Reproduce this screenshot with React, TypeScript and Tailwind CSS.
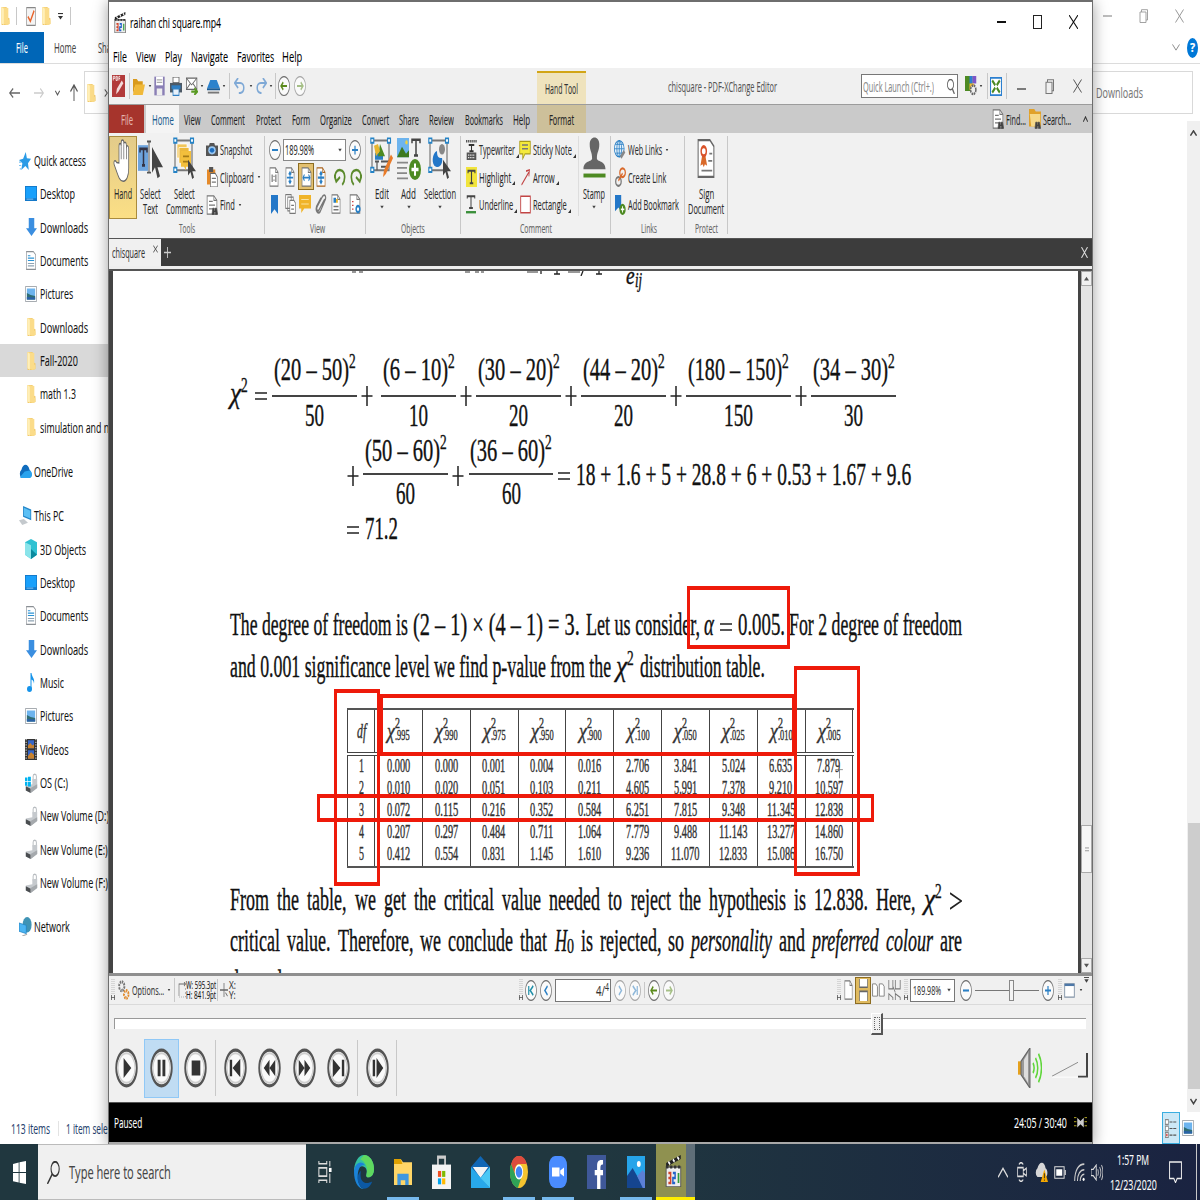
import React, { useLayoutEffect, useRef, useState } from "react";
import clsx from "clsx";

type Kids = { children?: React.ReactNode };

/* Text drawn in condensed form: either squeezed to the width w, or by the default ratio. */
function T({ w, className, children }: Kids & { w?: number; className?: string }) {
  const ref = useRef<HTMLSpanElement>(null);
  const [natural, setNatural] = useState(0);
  useLayoutEffect(() => {
    if (ref.current) setNatural(ref.current.offsetWidth);
  }, [children]);
  const width = w ?? natural * 0.5625;
  const scale = natural ? width / natural : 1;
  return (
    <span className={clsx("block shrink-0 whitespace-nowrap text-left", className)} style={{ width }}>
      <span ref={ref} className="inline-block origin-left" style={{ transform: `scaleX(${scale})` }}>
        {children}
      </span>
    </span>
  );
}

function I({ className, children, box = "0 0 16 16" }: Kids & { className?: string; box?: string }) {
  return (
    <svg viewBox={box} preserveAspectRatio="none" fill="none" className={clsx("block shrink-0", className)}>
      {children}
    </svg>
  );
}

const Caret = ({ className }: { className?: string }) => (
  <I className={clsx("h-[4px] w-[4px]", className)}>
    <path d="M1 3h14L8 14z" fill="#444" />
  </I>
);
const Sep = ({ className }: { className?: string }) => <div className={clsx("w-px shrink-0 bg-[#c8c8c8]", className)} />;

/* ---------- explorer icons ---------- */
const Folder = ({ className }: { className?: string }) => (
  <I className={className}>
    <path d="M1 0h9v9l5 1v5l-5 1H1z" fill="#f0c766" />
    <path d="M1 0l12 .8V11l2 1v3l-5 1L1 14.500z" fill="#fbdc8a" />
    <path d="M1 0l4 1.500V16l-4-1.500z" fill="#ffefb8" />
  </I>
);
const StarI = () => (
  <I className="h-[18px] w-[12px]">
    <path d="M9 0l1.500 5.500L16 6l-4 4 1 6-4.500-3.500L3 16l1.500-6L0 7l5.500-1z" fill="#2a9be6" />
    <path d="M0 9h3M0 12h3M1 15h2" stroke="#7cc3f2" />
  </I>
);
const DesktopI = () => (
  <I className="h-[15px] w-[12px]">
    <path d="M0 0h16v16H0z" fill="#1478c8" />
    <path d="M1 1h14v12H1z" fill="#19a0fb" />
    <path d="M2 14h9" stroke="#8fd0ff" />
  </I>
);
const DownI = () => (
  <I className="h-[18px] w-[11px]">
    <path d="M4 0h8v9h4l-8 7-8-7h4z" fill="#3a8ee0" />
  </I>
);
const DocI = () => (
  <I className="h-[19px] w-[10px]">
    <path d="M.7.500h11L15.300 3v12.500H.7z" fill="#fff" stroke="#8a8f94" />
    <path d="M3 4h4M3 6h10M3 8h10" stroke="#2a93d5" />
    <path d="M3 10.500h10M3 12.500h10" stroke="#8fa3b3" />
  </I>
);
const PicI = () => (
  <I className="h-[16px] w-[12px]">
    <path d="M.5.500h15v15H.5z" fill="#fff" stroke="#9aa0a6" />
    <path d="M2.500 2.500h11v11h-11z" fill="#6db4ee" />
    <path d="M2.500 7l5 2 6 1v3.500h-11z" fill="#2f6d74" />
    <path d="M2.500 11l11 .5v2h-11z" fill="#2b62a8" />
  </I>
);
const CloudI = () => (
  <I className="h-[15px] w-[13px]">
    <path d="M3 15a3.500 5 0 0 1 0-9C5-1 11-1 13 6a4 5 0 0 1 0 9z" fill="#0f6cbd" />
    <path d="M1 14l6-6 6-1c4 1 4 8 0 8H3z" fill="#29a3ee" />
  </I>
);
const PcI = () => (
  <I className="h-[19px] w-[13px]">
    <path d="M5 0l10 3v9L5 9z" fill="#2486c9" />
    <path d="M6 1.500l8 2.400v6.600L6 8.200z" fill="#5cc0f5" />
    <path d="M0 12l6-1 5 3-7 2z" fill="#c4c9cd" />
  </I>
);
const CubeI = () => (
  <I className="h-[20px] w-[12px]">
    <path d="M8 0l8 2.500v10L8 16 0 12.500v-10z" fill="#2fc1d2" />
    <path d="M0 2.500L8 5v11l-8-3.500z" fill="#8ae4ea" />
    <path d="M8 8l8 4.500L8 16z" fill="#0b8a9e" />
  </I>
);
const MusicI = () => (
  <I className="h-[19px] w-[8px]">
    <ellipse cx="5" cy="13.500" rx="5" ry="2.500" fill="#1593ea" />
    <path d="M7 0h2c1 4 7 4 5 9-1-3-3-3-5-3.500V14H7z" fill="#1593ea" />
  </I>
);
const VideoI = () => (
  <I className="h-[21px] w-[12px]">
    <path d="M0 0h16v16H0z" fill="#333" />
    <path d="M1.500 0v16M14.500 0v16" stroke="#ddd" strokeWidth="1.400" strokeDasharray="1 1" />
    <path d="M4 1h8v6H4zM4 8.500h8V15H4z" fill="#3566c8" />
    <path d="M4 5l3-2 3 2 2-1v3H4zM4 13l4-3 4 2v3H4z" fill="#c9822d" />
  </I>
);
const DriveI = ({ os }: { os?: boolean }) => (
  <I className="h-[20px] w-[13px]">
    <path d="M10 6V2.500c0-2 4-2 4 0V6" stroke="#b8bcc0" strokeWidth="1.200" />
    <path d="M9 5l6-.500V12l-8 4-6-2v-4l8-1z" fill="#c5c9cd" />
    <path d="M1 10.500l6 2V16l-6-2z" fill="#4a4d50" />
    <path d="M7 12l8-3v3l-8 4z" fill="#a5a9ad" />
    {os && <path d="M0 3.500h3v3H0zM3.700 3h3.500v3.500H3.700zM0 7.200h3v3H0zM3.700 7.200h3.500v3.500H3.700z" fill="#00b3f0" />}
  </I>
);
const NetI = () => (
  <I className="h-[19px] w-[13px]">
    <ellipse cx="10" cy="6.500" rx="5.500" ry="6.500" fill="#3f93b5" />
    <path d="M0 5l9 2v7l-9-2z" fill="#4bb4f2" stroke="#1e7fc0" strokeWidth=".7" />
    <path d="M4 16l6-1.500" stroke="#aaa" />
  </I>
);

function NavRow({ icon, w, children, top, active }: Kids & { icon: React.ReactNode; w: number; top?: boolean; active?: boolean }) {
  return (
    <div className={clsx("flex h-[33.33px] items-center", top ? "pl-[19px]" : "pl-[25px]", active && "bg-[#d9d9d9]")}>
      <div className="flex w-[15px] shrink-0">
        <div className="flex w-[12px] justify-center">{icon}</div>
      </div>
      <T w={w} className="text-[15px] leading-[21px]">{children}</T>
    </div>
  );
}

const WinBtns = ({ c }: { c: string }) => (
  <>
    <I className="h-[14px] w-[9px]" box="0 0 9 14"><path d="M0 7h9" stroke={c} strokeWidth="1.300" /></I>
    <I className="ml-[27px] h-[14px] w-[9px]" box="0 0 9 14"><path d="M1 3h6v10.500H1zM2.500 3V.700H8.500V11H7" stroke={c} strokeWidth=".9" /></I>
    <I className="ml-[27px] h-[14px] w-[9px]" box="0 0 9 14"><path d="M.5.500l8 13M8.500.500l-8 13" stroke={c} /></I>
  </>
);

function Explorer() {
  return (
    <div className="flex h-[1144px] flex-col bg-white">
      <div className="flex h-8 items-center">
        <Folder className="ml-[1px] h-[18px] w-[9px]" />
        <Sep className="ml-[6px] h-[18px] bg-[#999]" />
        <I className="ml-[9px] h-[19px] w-[10px]">
          <path d="M1 .500h14v15H1z" fill="#f4f4f4" stroke="#888" />
          <path d="M3 8l4 4 6-9" stroke="#e8632a" strokeWidth="2" />
        </I>
        <Folder className="ml-[6px] h-[18px] w-[9px]" />
        <I className="ml-[7px] h-[7px] w-[5px]"><path d="M0 1h16" stroke="#333" strokeWidth="3" /><path d="M0 7h16l-8 8z" fill="#333" /></I>
        <Sep className="ml-[7px] h-[18px] bg-[#999]" />
        <div className="ml-auto mr-[16px] flex items-center"><WinBtns c="#999" /></div>
      </div>
      <div className="flex h-8 items-center border-b border-[#dcdcdc] text-[15px]">
        <div className="flex h-[31px] w-[44px] items-center bg-[#0066b7] pl-[16px] text-white"><T w={12}>File</T></div>
        <T w={22} className="ml-[10px] text-[#444]">Home</T>
        <T w={20} className="ml-[22px] text-[#444]">Share</T>
        <I className="ml-auto h-[7px] w-[8px]"><path d="M1 1l7 13 7-13" stroke="#888" strokeWidth="2" /></I>
        <div className="ml-[7px] mr-[2px] flex h-[20px] w-[11px] items-center justify-center rounded-[50%] bg-[#0078d7] text-[13px] font-bold text-white"><T w={5}>?</T></div>
      </div>
      <div className="flex h-[57px] items-center">
        <I className="ml-[9px] h-[12px] w-[11px]"><path d="M16 8H1M6 2L1 8l5 6" stroke="#666" strokeWidth="1.700" /></I>
        <I className="ml-[14px] h-[12px] w-[10px]"><path d="M0 8h15M10 2l5 6-5 6" stroke="#ccc" strokeWidth="1.700" /></I>
        <I className="ml-[11px] h-[6px] w-[5px]"><path d="M1 2l7 11 7-11" stroke="#555" strokeWidth="3" /></I>
        <I className="ml-[10px] h-[17px] w-[8px]"><path d="M8 16V1M1 7l7-6 7 6" stroke="#555" strokeWidth="1.900" /></I>
        <div className="ml-[6px] flex h-[43px] w-[1109px] items-center border border-[#d9d9d9] text-[15px]">
          <Folder className="ml-[2px] h-[18px] w-[9px]" />
          <I className="ml-[8px] h-[8px] w-[4px]"><path d="M3 1l10 7-10 7" stroke="#555" strokeWidth="3" /></I>
          <T w={47} className="ml-[988px] text-[#777]">Downloads</T>
        </div>
      </div>
      <div className="flex h-[991px]">
        <div className="w-[109px] overflow-hidden pt-[23px] text-[#111]">
          <NavRow top w={52} icon={<StarI />}>Quick access</NavRow>
          <NavRow w={35} icon={<DesktopI />}>Desktop</NavRow>
          <NavRow w={48} icon={<DownI />}>Downloads</NavRow>
          <NavRow w={48} icon={<DocI />}>Documents</NavRow>
          <NavRow w={33} icon={<PicI />}>Pictures</NavRow>
          <NavRow w={48} icon={<Folder className="h-[18px] w-[9px]" />}>Downloads</NavRow>
          <NavRow active w={38} icon={<Folder className="h-[18px] w-[9px]" />}>Fall-2020</NavRow>
          <NavRow w={36} icon={<Folder className="h-[18px] w-[9px]" />}>math 1.3</NavRow>
          <NavRow w={69} icon={<Folder className="h-[18px] w-[9px]" />}>simulation and n</NavRow>
          <div className="h-[11px]" />
          <NavRow top w={39} icon={<CloudI />}>OneDrive</NavRow>
          <div className="h-[11px]" />
          <NavRow top w={30} icon={<PcI />}>This PC</NavRow>
          <NavRow w={46} icon={<CubeI />}>3D Objects</NavRow>
          <NavRow w={35} icon={<DesktopI />}>Desktop</NavRow>
          <NavRow w={48} icon={<DocI />}>Documents</NavRow>
          <NavRow w={48} icon={<DownI />}>Downloads</NavRow>
          <NavRow w={24} icon={<MusicI />}>Music</NavRow>
          <NavRow w={33} icon={<PicI />}>Pictures</NavRow>
          <NavRow w={29} icon={<VideoI />}>Videos</NavRow>
          <NavRow w={28} icon={<DriveI os />}>OS (C:)</NavRow>
          <NavRow w={69} icon={<DriveI />}>New Volume (D:)</NavRow>
          <NavRow w={68} icon={<DriveI />}>New Volume (E:)</NavRow>
          <NavRow w={68} icon={<DriveI />}>New Volume (F:)</NavRow>
          <div className="h-[11px]" />
          <NavRow top w={36} icon={<NetI />}>Network</NavRow>
        </div>
        <div className="ml-auto flex w-[13px] flex-col items-center bg-[#f0f0f0]">
          <I className="mt-[9px] h-[7px] w-[7px]"><path d="M1 13l7-11 7 11" stroke="#444" strokeWidth="3.500" /></I>
          <div className="mt-[686px] h-[266px] w-[12px] bg-[#cdcdcd]" />
          <I className="mt-[9px] h-[7px] w-[7px]"><path d="M1 2l7 11 7-11" stroke="#444" strokeWidth="3.500" /></I>
        </div>
      </div>
      <div className="flex h-8 items-center text-[15px] text-[#1f3f6e]">
        <T w={39} className="ml-[11px]">113 items</T>
        <Sep className="ml-[8px] h-[15px] bg-[#e3e3e3]" />
        <T w={42} className="ml-[7px]">1 item sele</T>
        <div className="ml-auto flex h-8 w-[18px] items-center justify-center border border-[#3aaee0] bg-[#cce8f6]">
          <I className="h-[19px] w-[12px]">
            <path d="M.5.500h4v4h-4zM.5 6h4v4h-4zM.5 11.500h4v4h-4z" fill="#fff" stroke="#888" />
            <path d="M6 2.500h10M6 8h10M6 13.500h10" stroke="#555" strokeDasharray="4 1" />
            <circle cx="2.500" cy="13.500" r="1" fill="#c33" />
          </I>
        </div>
        <div className="ml-[2px] mr-[6px]"><PicI /></div>
      </div>
    </div>
  );
}

/* ---------- PDF editor pieces ---------- */
const Ring = ({ className, c = "#777", a = "#2a7fc4", d }: { className?: string; c?: string; a?: string; d: string }) => (
  <I className={clsx("w-[12px]", className)}>
    <ellipse cx="8" cy="8" rx="7.400" ry="7.600" fill="#fafafa" stroke={c} strokeWidth="1" />
    <path d={d} stroke={a} strokeWidth="1.600" />
  </I>
);
const LEFT = "M12 8H4M7 5L4 8l3 3";
const RIGHT = "M4 8h8M9 5l3 3-3 3";
const PageDoc = ({ className, kids, c = "#777" }: { className?: string; kids?: React.ReactNode; c?: string }) => (
  <I className={className}>
    <path d="M1.500.700h9l4 3.500v11H1.500z" fill="#fff" stroke={c} />
    <path d="M10.500.700v3.500h4" stroke={c} />
    {kids}
  </I>
);
const lines = <path d="M4 5h5M4 8h8M4 11h5" stroke="#777" />;
const bino = <path d="M8 15.500l1-5h2v2h1v-2h2l1.500 5H12.500v-2h-1.500v2z" fill="#444" stroke="#444" strokeWidth=".6" />;
const Clapper = ({ className }: { className?: string }) => (
  <I className={className}>
    <path d="M1 6h13v10H1z" fill="#eee" stroke="#555" strokeWidth=".8" />
    <path d="M1 4l13-4v2L1 6z" fill="#222" />
    <path d="M3 3.400l1.500 1.200M7 2.200l1.500 1.200M11 1l1.500 1.200" stroke="#fff" strokeWidth="1.200" />
    <path d="M1 6h13" stroke="#333" strokeWidth="1.500" strokeDasharray="2 1.500" />
    <path d="M3 9h2v5H3M3 11.500h2" stroke="#d2452c" strokeWidth="1.300" />
    <path d="M7 9h2v2.500H7V14h2" stroke="#2563c9" strokeWidth="1.300" />
    <path d="M12 9v5" stroke="#2f9b3c" strokeWidth="1.500" />
  </I>
);
const SelFrame = ({ children, className }: Kids & { className?: string }) => (
  <I className={clsx("h-[42px] w-[24px]", className)} box="0 0 24 24">
    <path d="M2 2h17v17H2z" stroke="#777" strokeWidth="1.200" />
    {children}
    <path d="M.8.800h3v2.500h-3zM17.500.800h3v2.500h-3zM.8 17.500h3V20h-3z" fill="#fff" stroke="#2583c6" strokeWidth="1.100" />
  </I>
);
const CursorP = "M15 13v9l2.500-2 1.700 4 1.800-.8-1.700-3.700H23z";

function QuickBar() {
  return (
    <div className="flex h-[36px] items-center bg-[#f0f0f0] text-[14px]">
      <I className="ml-[3px] h-[22px] w-[13px]">
        <path d="M0 0h16v16H0z" fill="#b23a3a" /><path d="M5 14l1-4 6-6 2 2-6 6z" fill="#f3dada" />
        <path d="M1.500 4V1h2v1.500h-2M5 1v3h1.500V1zM8.500 4V1H10M8.500 2.500H10" stroke="#fff" strokeWidth=".7" />
      </I>
      <Sep className="ml-[4px] h-[26px]" />
      <I className="ml-[3px] h-[17px] w-[12px]"><path d="M0 1h5l2 2h6v4H3L0 15z" fill="#d99a1c" /><path d="M3 6h13l-3 10H0z" fill="#f0b93a" /></I>
      <Caret className="ml-[3px] scale-75" />
      <I className="ml-[2px] h-[20px] w-[11px]"><path d="M.5.500h15v15H.5z" fill="#8a7fb5" /><path d="M3 .500h10v7H3z" fill="#fff" /><path d="M4 3h8M4 5h8" stroke="#aaa" /><path d="M4 10h8v5.500H4z" fill="#eee" /></I>
      <I className="ml-[5px] h-[19px] w-[12px]"><path d="M4 0h8v5H4z" fill="#fff" stroke="#555" /><path d="M0 5h16v8H0z" fill="#4d5a66" /><path d="M2 7h12v3H2z" fill="#2e7fc4" /><path d="M4 10h8v5.500H4z" fill="#e7f1fa" stroke="#2e7fc4" /></I>
      <I className="ml-[4px] h-[18px] w-[12px]"><path d="M.5 1h14v10H.5z" fill="#fff" stroke="#666" /><path d="M.5 1l7 6 7-6M.5 11l5-5M14.500 11l-5-5" stroke="#666" /><path d="M7 13h7M11 10l4 3-4 3" stroke="#5a9a22" strokeWidth="2" /></I>
      <Caret className="ml-[2px] scale-75" />
      <I className="ml-[3px] h-[15px] w-[13px]"><path d="M4 1h8l4 9H0z" fill="#2b82cc" /><path d="M0 10h16v2H0z" fill="#1c5b93" /><path d="M1 14.500h14" stroke="#777" strokeWidth="2" /></I>
      <Caret className="ml-[2px] scale-75" />
      <Sep className="ml-[3px] h-[26px]" />
      <I className="ml-[4px] h-[16px] w-[11px]"><path d="M1 5h8c7 0 7 9 0 10H7M6 0L1 5l5 5" stroke="#7fa9d6" strokeWidth="2.200" /></I>
      <Caret className="ml-[4px] scale-75" />
      <I className="ml-[3px] h-[16px] w-[11px]"><path d="M15 5H7C0 5 0 14 7 15h1M10 0l5 5-5 5" stroke="#7fa9d6" strokeWidth="2.200" /></I>
      <Caret className="ml-[2px] scale-75" />
      <Sep className="ml-[2px] h-[26px]" />
      <Ring className="ml-[2px] h-[20px]" d={LEFT} a="#5b8a1c" />
      <Ring className="ml-[4px] h-[20px]" d={RIGHT} a="#a5bf86" c="#aaa" />
      <div className="ml-[231px] mt-[3px] flex h-[33px] w-[49px] items-center justify-center border-t-2 border-[#d2a516] bg-[#efe3bd]"><T w={33} className="text-[#333]">Hand Tool</T></div>
      <T w={109} className="ml-[82px] text-[#555]">chisquare - PDF-XChange Editor</T>
      <div className="ml-[84px] flex h-[24px] w-[97px] items-center border border-[#777] bg-white">
        <T w={71} className="ml-[1px] text-[#888]">Quick Launch (Ctrl+.)</T>
        <I className="ml-[12px] h-[15px] w-[9px]"><circle cx="8" cy="6" r="5.500" stroke="#666" strokeWidth="1.500" /><path d="M11 10l4 6" stroke="#666" strokeWidth="2" /></I>
      </div>
      <I className="ml-[7px] h-[20px] w-[12px]"><path d="M0 0h10v12H0z" fill="#4d8a22" /><path d="M6 0h4v6H6z" fill="#2b7fd0" /><path d="M10 0h5v6h-5z" fill="#7d55c7" /><path d="M6 6h6v5H6z" fill="#f0b93a" /><circle cx="11" cy="11" r="3.500" fill="#eee" stroke="#666" strokeWidth="2" strokeDasharray="2 .8" /></I>
      <Caret className="ml-[2px] scale-75" />
      <Sep className="ml-[4px] h-[26px]" />
      <I className="ml-[2px] h-[19px] w-[12px]"><path d="M.7.700h14.600v14.600H.7z" fill="#fff" stroke="#2b7fd0" strokeWidth="1.500" /><path d="M3 3l4 4M13 3L9 7M3 13l4-4M13 13L9 9" stroke="#4d8a22" strokeWidth="2.500" /></I>
      <Sep className="ml-[4px] h-[26px]" />
      <div className="ml-[10px] flex items-center"><I className="mt-[5px] h-[2px] w-[9px]"><path d="M0 8h16" stroke="#555" strokeWidth="12" /></I>
        <I className="ml-[19px] h-[15px] w-[9px]" box="0 0 9 14"><path d="M1 3h6v10.500H1zM2.500 3V.700H8.500V11H7" stroke="#777" /></I>
        <I className="ml-[19px] h-[14px] w-[9px]" box="0 0 9 14"><path d="M.5.500l8 13M8.500.500l-8 13" stroke="#555" /></I></div>
    </div>
  );
}

function RibbonTabs() {
  return (
    <div className="flex h-[29px] items-center border-t border-[#9c9c9c] bg-[#cacaca] text-[14px] text-[#222]">
      <div className="flex h-full w-[35px] items-center justify-center bg-[#a6342c]"><T w={12} className="text-[#e3b5ae]">File</T></div>
      <div className="ml-[2px] flex h-full w-[33px] items-center justify-center bg-[#f4f4f4]"><T w={22} className="text-[#1a5c8e]">Home</T></div>
      <T w={17} className="ml-[5px]">View</T>
      <T w={34} className="ml-[10px]">Comment</T>
      <T w={25} className="ml-[11px]">Protect</T>
      <T w={18} className="ml-[11px]">Form</T>
      <T w={32} className="ml-[10px]">Organize</T>
      <T w={27} className="ml-[10px]">Convert</T>
      <T w={20} className="ml-[10px]">Share</T>
      <T w={25} className="ml-[10px]">Review</T>
      <T w={38} className="ml-[11px]">Bookmarks</T>
      <T w={17} className="ml-[10px]">Help</T>
      <div className="ml-[7px] flex h-full w-[49px] items-center justify-center bg-[#cdc09a]"><T w={25}>Format</T></div>
      <PageDoc className="ml-auto h-[20px] w-[12px]" kids={<>{lines}{bino}</>} />
      <T w={20} className="ml-[2px]">Find...</T>
      <I className="ml-[3px] h-[20px] w-[12px]"><path d="M0 0h7l2 2h7v12H0z" fill="#e0a12a" /><path d="M1 4h14v10H3z" fill="#f6d98a" />{bino}</I>
      <T w={28} className="ml-[2px]">Search...</T>
      <I className="ml-[12px] mr-[4px] h-[7px] w-[5px]"><path d="M1 13l7-11 7 11" stroke="#333" strokeWidth="3" /></I>
    </div>
  );
}

const GLabel = ({ w, children }: Kids & { w: number }) => (
  <div className="flex h-[20px] items-center justify-center text-[13px] text-[#666]"><T w={w}>{children}</T></div>
);

const Small = ({ icon, w, arrow, corner, children }: Kids & { icon: React.ReactNode; w: number; arrow?: boolean; corner?: boolean }) => (
  <div className="flex h-[27.500px] items-center">
    <div className="mr-px flex w-[14px] shrink-0 justify-center">{icon}</div>
    <T w={w}>{children}</T>
    {arrow && <Caret className="ml-[3px] scale-75" />}
    {corner && <I className="ml-[1px] mt-[12px] h-[4px] w-[3px]"><path d="M16 0v16H0z" fill="#333" /></I>}
  </div>
);

function Ribbon() {
  return (
    <div className="flex h-[106px] border-b border-[#555] bg-[#f1f1f1] pt-[3px] text-[14px] leading-[15px] text-[#2b2b2b]">
      <div className="flex w-[155px] flex-col">
        <div className="flex h-[84px]">
          <div className="flex w-[28px] flex-col items-center border border-[#a98b3e] bg-gradient-to-b from-[#e3cb8a] to-[#fbdf85] pt-[2px]">
            <I className="h-[44px] w-[20px]" box="0 0 20 24">
              <path d="M6 13V4c0-2 2.200-2 2.200 0V2c0-2 2.600-2 2.600 0v1c0-2 2.600-1.500 2.600.500V5c0-2 2.300-1.500 2.300.500V16c0 4-2 7-5.500 7-4 0-5-3-9-9-1-2 1-3 2.500-1.200z" fill="#fff" stroke="#666" strokeWidth=".8" />
              <path d="M8.200 4v7M10.800 3v8M13.400 4v7" stroke="#777" strokeWidth=".8" />
            </I>
            <T w={18} className="mt-[3px]">Hand</T>
          </div>
          <div className="flex w-[27px] flex-col items-center">
            <I className="h-[44px] w-[25px]" box="0 0 25 24">
              <path d="M0 5h10v14H0z" fill="#6da3dc" /><path d="M2 9V7h7v2M5.500 7v9M4 16h3" stroke="#334" strokeWidth="1.500" />
              <path d="M9 3h4M11 3v17M9 20h4" stroke="#555" /><path d="M14 6v14l3-3 2.500 6 2.500-1-2.500-5H25z" fill="#444" />
            </I>
            <T w={21} className="mt-[6px]">Select</T><T w={15}>Text</T>
          </div>
          <div className="flex w-[41px] flex-col items-center">
            <SelFrame className="mt-[1px]"><path d="M4 4h10v8H4z" fill="#f1c65a" stroke="#fff" strokeWidth=".5" /><path d="M6 6h10v9H6z" fill="#edb93c" stroke="#fff" strokeWidth=".5" /><path d="M8 8h10v9h-5v2l-2-2H8z" fill="#f3bf3c" /><path d="M10 11h6M10 14h6" stroke="#a57b17" /><path d={CursorP} fill="#444" /></SelFrame>
            <T w={21} className="mt-[7px]">Select</T><T w={37}>Comments</T>
          </div>
          <div className="flex flex-col">
            <Small w={32} icon={<I className="h-[13px] w-[12px]"><path d="M0 3h4l1-3h6l1 3h4v13H0z" fill="#555" /><circle cx="8" cy="9" r="5" fill="#9cc8f0" /><circle cx="8" cy="9" r="3" fill="#1c6dc0" /></I>}>Snapshot</Small>
            <Small w={34} arrow icon={<I className="h-[20px] w-[11px]"><path d="M0 2h12v12H0z" fill="#e58a2a" /><path d="M3 0h6v4H3z" fill="#555" /><path d="M5 5h7l3 3v8H5z" fill="#fff" stroke="#666" /><path d="M7 9h6M7 12h6" stroke="#777" /></I>}>Clipboard</Small>
            <Small w={15} arrow icon={<PageDoc className="h-[20px] w-[12px]" kids={<>{lines}{bino}</>} />}>Find</Small>
          </div>
        </div>
        <GLabel w={16}>Tools</GLabel>
      </div>
      <Sep className="h-[98px]" />
      <div className="flex w-[100px] flex-col pl-[4px]">
        <div className="flex h-[84px] flex-col">
          <div className="flex h-[27px] items-center">
            <Ring className="h-[20px]" d="M4 8h8" a="#2a7fc4" />
            <div className="ml-[2px] flex h-[22px] w-[63px] items-center border border-[#888] bg-white"><T w={29} className="ml-[1px]">189.98%</T><Caret className="ml-[24px]" /></div>
            <Ring className="ml-[3px] h-[20px]" d="M4 8h8M8 4.500v7" a="#2a7fc4" />
          </div>
          <div className="flex h-[27px] items-center">
            <PageDoc className="h-[20px] w-[10px]" kids={<path d="M5 6v6M11 6v6M8 7v1M8 10v1" stroke="#555" strokeWidth="1.500" />} />
            <PageDoc className="ml-[6px] h-[20px] w-[10px]" kids={<path d="M3 8.500h10M8 4v9M6 6l2-2 2 2M6 11l2 2 2-2" stroke="#2a7fc4" strokeWidth="1.500" />} />
            <div className="ml-[3px] flex h-[27px] w-[16px] items-center justify-center border border-[#8d6d22] bg-[#e3c070]"><PageDoc className="h-[20px] w-[11px]" kids={<path d="M3 8.500h10M5 6L3 8.500 5 11M11 6l2 2.500L11 11" stroke="#2a7fc4" strokeWidth="1.300" />} /></div>
            <PageDoc className="ml-[2px] h-[20px] w-[10px]" c="#a8621c" kids={<path d="M3 8.500h10M8 4v9M6 6l2-2 2 2M6 11l2 2 2-2" stroke="#2a7fc4" strokeWidth="1.700" />} />
            <I className="ml-[8px] h-[18px] w-[12px]"><path d="M3 12C-1 5 4 1 9 2c6 1 7 8 2 13M0 6l3 6 5-4" stroke="#5b8a2c" strokeWidth="2.200" /></I>
            <I className="ml-[4px] h-[18px] w-[12px]"><path d="M13 12C17 5 12 1 7 2 1 3 0 10 5 15M16 6l-3 6-5-4" stroke="#5b8a2c" strokeWidth="2.200" /></I>
          </div>
          <div className="flex h-[28px] items-center">
            <I className="ml-[2px] h-[19px] w-[7px]"><path d="M0 0h16v16l-8-4-8 4z" fill="#2377c8" /></I>
            <I className="ml-[7px] h-[20px] w-[11px]"><path d="M1 .500h8v11H1zM4 2.500h8v11H4z" fill="#fff" stroke="#777" /><path d="M7 5h6l2 2v8.500H7z" fill="#fff" stroke="#777" /><path d="M9 9h4M9 12h4" stroke="#777" /></I>
            <I className="ml-[3px] h-[18px] w-[12px]"><path d="M0 0h16v12H7l-4 4v-4H0z" fill="#f0b429" /><path d="M3 4h10M3 8h10" stroke="#fbe3a0" /></I>
            <I className="ml-[4px] h-[20px] w-[12px]"><path d="M13 4L5 13c-1 1-4 0-2-3L10 2c2-2 5-1 4 2L7 14c-2 2-7 1-5-4L8 3" stroke="#777" strokeWidth="1.500" /></I>
            <PageDoc className="ml-[4px] h-[20px] w-[10px]" kids={<><path d="M4 3h4v4H4z" fill="#2a7fc4" /><path d="M8 4h3v3H8z" fill="#e6b52f" /><path d="M4 10h8M4 12.500h8" stroke="#777" strokeWidth="1.200" /></>} />
            <PageDoc className="ml-[8px] h-[20px] w-[12px]" kids={<><path d="M4 6h2M4 9h2M4 12h2" stroke="#c44" /><circle cx="12" cy="12" r="2.500" stroke="#2a7fc4" strokeWidth="2" /></>} />
          </div>
        </div>
        <GLabel w={15}>View</GLabel>
      </div>
      <Sep className="h-[98px]" />
      <div className="flex w-[94px] flex-col">
        <div className="flex h-[84px] justify-between pl-[3px] pr-[4px]">
          <div className="flex w-[25px] flex-col items-center">
            <SelFrame className="mt-[1px]"><path d="M5 9h8v4H5z" fill="#2a7fc4" /><path d="M10 4l5 7h-7z" fill="#4d8a22" /><path d="M4 5l4-1 2 4-4 3z" fill="#e6b52f" /><path d="M5 14h4M7 14v5M11 14h8M11 17h6" stroke="#555" strokeWidth="1.200" /><path d="M23 12l-7 9-3 2 1-4 7-9z" fill="#e97b28" /></SelFrame>
            <T w={14} className="mt-[7px]">Edit</T><Caret className="mt-[4px]" />
          </div>
          <div className="flex w-[26px] flex-col items-center">
            <I className="mt-[2px] h-[42px] w-[24px]" box="0 0 24 24">
              <path d="M0 0h12v11H0z" fill="#6db4ee" /><path d="M0 11l5-6 4 4 3-2v4z" fill="#3d7a1f" /><circle cx="9.500" cy="2.500" r="1.200" fill="#f3d23c" />
              <path d="M15 3V1h8v2M19 1v9M17 10h4" stroke="#444" strokeWidth="1.500" /><path d="M0 14h11M0 17h10M0 20h10M0 23h11" stroke="#888" />
              <ellipse cx="18" cy="18" rx="6" ry="6" fill="#4d8a22" /><path d="M14.500 18h7M18 14.500v7" stroke="#fff" strokeWidth="2" />
            </I>
            <T w={15} className="mt-[6px]">Add</T><Caret className="mt-[4px]" />
          </div>
          <div className="flex w-[33px] flex-col items-center">
            <SelFrame className="mt-[1px]"><circle cx="14" cy="7" r="3" fill="#888" /><path d="M9 8c-5 1-6 8-1 9 5 1 7-3 6-5-4 0-5-1-5-4z" fill="#2377c8" /><path d={CursorP} fill="#444" /></SelFrame>
            <T w={32} className="mt-[7px]">Selection</T><Caret className="mt-[4px]" />
          </div>
        </div>
        <GLabel w={24}>Objects</GLabel>
      </div>
      <Sep className="h-[98px]" />
      <div className="flex w-[149px] flex-col">
        <div className="flex h-[84px]">
          <div className="flex w-[55px] flex-col pl-[3px]">
            <Small w={36} corner icon={<I className="h-[20px] w-[11px]"><path d="M0 1h16" stroke="#555" strokeDasharray="2 1" strokeWidth="2" /><path d="M4 4h8M8 4v5M5 9h6" stroke="#333" strokeWidth="1.500" /><path d="M1 10h14v6H1z" fill="#555" /><path d="M3 12h10M3 14h10" stroke="#eee" strokeDasharray="1.500 1" /></I>}>Typewriter</Small>
            <Small w={32} corner icon={<I className="h-[20px] w-[11px]"><path d="M0 0h16v16H0z" fill="#f1e43c" /><path d="M3 5V3h10v2M8 3v10M5.500 13h5" stroke="#444" strokeWidth="1.600" /></I>}>Highlight</Small>
            <Small w={34} corner icon={<I className="h-[19px] w-[10px]"><path d="M2 3V1h12v2M8 1v10M5 11h6" stroke="#444" strokeWidth="1.600" /><path d="M0 14.500h16" stroke="#3a8f3a" strokeWidth="2" /></I>}>Underline</Small>
          </div>
          <div className="flex w-[62px] flex-col pl-[2px]">
            <Small w={39} corner icon={<I className="h-[20px] w-[12px]"><path d="M1 1h14v10H8l-3 4v-4H1z" fill="#f4ea3c" stroke="#a89a16" /><path d="M4 4h8M4 7h8" stroke="#777" strokeWidth="1.200" /></I>}>Sticky Note</Small>
            <Small w={22} corner icon={<I className="h-[17px] w-[9px]"><path d="M1 15L14 3M9 2l6-1-1 6" stroke="#c24545" strokeWidth="1.500" /></I>}>Arrow</Small>
            <Small w={34} corner icon={<I className="h-[19px] w-[11px]"><path d="M1 1h14v14H1z" stroke="#c24545" strokeWidth="1.300" fill="#fff" /></I>}>Rectangle</Small>
          </div>
          <Sep className="h-[80px] bg-[#ddd]" />
          <div className="flex w-[30px] flex-col items-center">
            <I className="mt-[1px] h-[43px] w-[23px]" box="0 0 24 24">
              <path d="M7 4c0-5 10-5 10 0 0 4-2.500 4-2.500 8 0 2 9 1 9 6H.5c0-5 9-4 9-6C9.500 8 7 8 7 4z" fill="#666" /><path d="M.5 21.500h23" stroke="#4d8a22" strokeWidth="2.200" />
            </I>
            <T w={22} className="mt-[6px]">Stamp</T><Caret className="mt-[4px]" />
          </div>
        </div>
        <GLabel w={32}>Comment</GLabel>
      </div>
      <Sep className="h-[98px]" />
      <div className="flex w-[73px] flex-col pl-[2px]">
        <div className="flex h-[84px] flex-col">
          <Small w={34} arrow icon={<I className="h-[20px] w-[12px]"><circle cx="7" cy="7" r="6.500" fill="#e4f1fb" stroke="#2a7fc4" /><path d="M.5 7h13M7 .500v13M2 3.500h10M2 10.500h10" stroke="#2a7fc4" strokeWidth=".8" /><ellipse cx="7" cy="7" rx="3.200" ry="6.500" stroke="#2a7fc4" strokeWidth=".8" /><path d="M9 14l5-5" stroke="#888" strokeWidth="3" /></I>}>Web Links</Small>
          <Small w={38} icon={<I className="h-[20px] w-[11px]"><ellipse cx="11" cy="4.500" rx="4" ry="3.500" stroke="#d9692a" strokeWidth="1.800" /><ellipse cx="5" cy="11.500" rx="4" ry="3.500" stroke="#777" strokeWidth="1.800" /><path d="M5 11l6-6" stroke="#d9692a" strokeWidth="1.500" /></I>}>Create Link</Small>
          <Small w={51} icon={<I className="h-[20px] w-[11px]"><path d="M0 0h9v13l-4-3-5 3z" fill="#2377c8" /><circle cx="11" cy="11.500" r="4.500" fill="#4d8a22" /><path d="M8.500 11.500h5M11 9v5" stroke="#fff" strokeWidth="1.300" /></I>}>Add Bookmark</Small>
        </div>
        <GLabel w={16}>Links</GLabel>
      </div>
      <Sep className="h-[98px]" />
      <div className="flex w-[42px] flex-col">
        <div className="flex h-[84px] flex-col items-center">
          <I className="mt-[3px] h-[39px] w-[18px]" box="0 0 16 16">
            <path d="M1 .500h10.500L15 3v12.500H1z" fill="#fff" stroke="#666" strokeWidth=".9" /><path d="M4.500 7l-1.500 4 2-.6 1 1.200 1-1.200 2 .6L7.500 7z" fill="#d9692a" /><ellipse cx="6" cy="5" rx="2.300" ry="1.900" fill="#fff" stroke="#d9532a" strokeWidth="1.300" /><path d="M11 6h2.500M10 9h3.500M4 13h9.500" stroke="#777" strokeWidth=".7" />
          </I>
          <T w={15} className="mt-[8px]">Sign</T><T w={36}>Document</T>
        </div>
        <GLabel w={23}>Protect</GLabel>
      </div>
      <Sep className="h-[98px]" />
    </div>
  );
}

/* ---------- document ---------- */
function Frac({ w, num, nw, den, dw, className }: { w: number; num: string; nw: number; den: string; dw: number; className?: string }) {
  return (
    <div className={clsx("flex shrink-0 flex-col items-center", className)} style={{ width: w }}>
      <div className="flex h-[43px]">
        <T w={nw} className="leading-[31px]">{num}</T>
        <T w={7} className="text-[21px] leading-[14px]">2</T>
      </div>
      <div className="h-[2px] w-full bg-[#444]" />
      <T w={dw} className="h-[38px] leading-[36px]">{den}</T>
    </div>
  );
}

const Op = ({ s, className }: { s: "+" | "="; className?: string }) => (
  <I className={clsx("h-[20px] w-[12px]", className)} box="0 0 12 20">
    <path d={s === "+" ? "M.500 10h11M6 0v20" : "M0 7h12M0 13h12"} stroke="#222" strokeWidth="1.500" />
  </I>
);

const Chi = ({ className }: { className?: string }) => (
  <div className={clsx("flex shrink-0", className)}>
    <T w={11} className="text-[30px] italic">χ</T>
    <T w={7} className="text-[21px] leading-[24px]">2</T>
  </div>
);

const heads = ["995", "990", "975", "950", "900", "100", "050", "025", "010", "005"];
const rows = [
  ["0.000", "0.000", "0.001", "0.004", "0.016", "2.706", "3.841", "5.024", "6.635", "7.879"],
  ["0.010", "0.020", "0.051", "0.103", "0.211", "4.605", "5.991", "7.378", "9.210", "10.597"],
  ["0.072", "0.115", "0.216", "0.352", "0.584", "6.251", "7.815", "9.348", "11.345", "12.838"],
  ["0.207", "0.297", "0.484", "0.711", "1.064", "7.779", "9.488", "11.143", "13.277", "14.860"],
  ["0.412", "0.554", "0.831", "1.145", "1.610", "9.236", "11.070", "12.833", "15.086", "16.750"],
];

function ChiTable() {
  return (
    <div className="w-[507px] border-y-2 border-[#555] text-[18px] leading-[20px] text-[#333]">
      <div className="flex h-[42px] border-l border-[#444]">
        <div className="flex w-[27px] items-center justify-center border-r border-[#444]"><T w={9} className="text-[21px] italic">df</T></div>
        {heads.map((h) => (
          <div key={h} className="flex w-[47.850px] items-center justify-center border-r border-[#444]">
            <T w={8} className="text-[20px] italic">χ</T>
            <div className="flex w-[14px] flex-col">
              <T w={5} className="-mb-[3px] text-[14px] leading-[12px]">2</T>
              <T w={15} className="text-[14px] leading-[17px]">{"." + h}</T>
            </div>
          </div>
        ))}
      </div>
      <div className="h-[4px] border-y border-[#444]" />
      <div className="border-l border-[#444]">
        {rows.map((r, i) => (
          <div key={i} className="flex h-[22px]">
            <div className="flex w-[27px] justify-center border-r border-[#444]"><T w={5}>{String(i + 1)}</T></div>
            {r.map((c, j) => (
              <div key={j} className="flex w-[47.850px] justify-center border-r border-[#444]">
                <T w={c.length === 5 ? 23.5 : 28.5}>{c}</T>
              </div>
            ))}
          </div>
        ))}
      </div>
    </div>
  );
}

const Words = ({ text, className }: { text: string; className?: string }) => (
  <>{text.split(" ").map((x, i) => <T key={i} className={className}>{x}</T>)}</>
);

function Page() {
  return (
    <div className="relative h-[702px] w-[965px] overflow-hidden bg-white pl-[117px] font-['Liberation_Serif',serif] text-[32px] leading-[40px] text-[#111] [-webkit-text-stroke:0.4px]">
      <div className="flex h-[83px] items-start italic">
        <I className="ml-[122px] h-[5px] w-[254px]" box="0 0 254 5">
          <path d="M0 1h4M7 1h4M113 1h5M123 1h4M129 1h3M175 1h11M216 1h12" stroke="#333" />
          <path d="M189 0v3M205 0v3M202 3h6M231 0l-2 5M247 0v3M244 3h6" stroke="#222" strokeWidth="1.300" />
        </I>
        <T w={9} className="ml-[20px] text-[26px] leading-[10px]">e</T>
        <T w={7} className="text-[20px] leading-[19px]">ij</T>
      </div>
      <div className="flex h-[81px]">
        <Chi className="mt-[19px]" />
        <Op s="=" className="ml-[7px] mt-[32px]" />
        <Frac className="ml-[5px]" w={85} num="(20 – 50)" nw={75} den="50" dw={19} />
        <Op s="+" className="ml-[4px] mt-[32px]" />
        <Frac className="ml-[8px]" w={75} num="(6 – 10)" nw={65} den="10" dw={19} />
        <Op s="+" className="ml-[4px] mt-[32px]" />
        <Frac className="ml-[4px]" w={85} num="(30 – 20)" nw={75} den="20" dw={19} />
        <Op s="+" className="ml-[4px] mt-[32px]" />
        <Frac className="ml-[4px]" w={85} num="(44 – 20)" nw={75} den="20" dw={19} />
        <Op s="+" className="ml-[4px] mt-[32px]" />
        <Frac className="ml-[4px]" w={105} num="(180 – 150)" nw={94} den="150" dw={29} />
        <Op s="+" className="ml-[4px] mt-[32px]" />
        <Frac className="ml-[4px]" w={85} num="(34 – 30)" nw={75} den="30" dw={19} />
      </div>
      <div className="-mt-[2px] flex h-[80px] pl-[117px]">
        <Op s="+" className="mt-[33px]" />
        <Frac className="ml-[4px] mt-[2px]" w={85} num="(50 – 60)" nw={75} den="60" dw={19} />
        <Op s="+" className="ml-[4px] mt-[33px]" />
        <Frac className="ml-[5px] mt-[2px]" w={84} num="(36 – 60)" nw={75} den="60" dw={19} />
        <Op s="=" className="ml-[5px] mt-[33px]" />
        <T w={335} className="ml-[6px] mt-[21px]">18 + 1.6 + 5 + 28.8 + 6 + 0.53 + 1.67 + 9.6</T>
      </div>
      <div className="flex h-[91px] pl-[117px]">
        <Op s="=" className="mt-[7px]" />
        <T w={33} className="-mt-[5px] ml-[6px]">71.2</T>
      </div>
      <div className="flex h-[42px]">
        <T w={178}>The degree of freedom is</T>
        <T w={167} className="ml-[5px]">(2 – 1) × (4 – 1) = 3.</T>
        <T w={114} className="ml-[6px]">Let us consider,</T>
        <T w={10} className="ml-[4px] italic">α</T>
        <Op s="=" className="ml-[6px] mt-[13px]" />
        <T w={47} className="ml-[6px]">0.005.</T>
        <T w={173} className="ml-[4px]">For 2 degree of freedom</T>
      </div>
      <div className="flex h-[62px]">
        <T w={381}>and 0.001 significance level we find p-value from the</T>
        <Chi className="ml-[5px]" />
        <T w={125} className="ml-[6px]">distribution table.</T>
      </div>
      <div className="h-[171px] pl-[117px]"><ChiTable /></div>
      <div className="flex h-[40.500px] w-[732px] justify-between">
        <Words text="From the table, we get the critical value needed to reject the hypothesis is 12.838. Here," />
        <Chi />
        <I className="mt-[13px] h-[18px] w-[12px]"><path d="M0 1l15 7L0 15" stroke="#222" strokeWidth="1.700" /></I>
      </div>
      <div className="flex h-[41.500px] w-[732px] justify-between">
        <Words text="critical value. Therefore, we conclude that" />
        <div className="flex"><T w={12} className="italic">H</T><T w={7} className="text-[22px] leading-[52px]">0</T></div>
        <Words text="is rejected, so" />
        <Words text="personality" className="italic" />
        <T>and</T>
        <Words text="preferred colour" className="italic" />
        <T>are</T>
      </div>
      <T>dependent.</T>

      <I className="absolute left-[722px] top-[498px] h-[10px] w-[9px]"><path d="M2 1h12M8 1v14" stroke="#666" strokeWidth="1.200" /></I>
      <div className="absolute left-[574px] top-[315px] h-[63px] w-[103px] border-x-[3px] border-y-4 border-[#ee1a0a]" />
      <div className="absolute left-[221px] top-[418px] h-[197px] w-[46px] border-x-[3px] border-y-4 border-[#ee1a0a]" />
      <div className="absolute left-[267px] top-[423px] h-[62px] w-[415px] border-x-[3px] border-y-4 border-[#ee1a0a]" />
      <div className="absolute left-[681px] top-[395px] h-[210px] w-[66px] border-x-[3px] border-y-4 border-[#ee1a0a]" />
      <div className="absolute left-[204px] top-[523px] h-[28px] w-[557px] border-x-[3px] border-y-4 border-[#ee1a0a]" />
    </div>
  );
}

const Grip = ({ className }: { className?: string }) => (
  <I className={clsx("h-[22px] w-[4px]", className)} box="0 0 4 22">
    <path d="M1 0v15M3 0v15" stroke="#bbb" strokeDasharray="1 1" /><path d="M.5 16v5M3.500 16v5M0 18.500h4" stroke="#555" strokeWidth=".8" />
  </I>
);

function PdfStatus() {
  return (
    <div className="flex h-[29px] items-center border-b border-[#dadada] bg-[#f0f0f0] text-[13.500px] text-[#333]">
      <Grip className="ml-[2px]" />
      <I className="ml-[3px] h-[20px] w-[12px]"><circle cx="5" cy="5" r="3.500" stroke="#777" strokeWidth="2.500" strokeDasharray="1.800 .9" /><circle cx="11" cy="11.500" r="3" stroke="#e0892a" strokeWidth="2.500" strokeDasharray="1.800 .9" /></I>
      <T w={32} className="ml-[2px]">Options...</T>
      <Caret className="ml-[3px] scale-75" />
      <Sep className="ml-[3px] h-[24px]" />
      <I className="ml-[3px] h-[16px] w-[8px]"><path d="M2 14V2h12M12 0l3 2-3 2" stroke="#666" strokeWidth="1.200" /><path d="M2 15h13V5" stroke="#999" strokeDasharray="2 2" /></I>
      <div className="flex flex-col text-[10.500px] leading-[10.500px] text-[#111]"><T w={30}>W: 595.3pt</T><T w={30}>H: 841.9pt</T></div>
      <Sep className="ml-[1px] h-[22px]" />
      <I className="ml-[2px] h-[14px] w-[8px]"><path d="M0 8h16M8 0v16M11 11l4 4" stroke="#666" strokeWidth="1.500" /></I>
      <div className="ml-[1px] flex flex-col text-[10.500px] leading-[10.500px]"><T w={7}>X:</T><T w={7}>Y:</T></div>
      <Grip className="ml-[283px]" />
      <Ring className="ml-[2px] h-[21px]" d="M5 4.500v7M11 4.500L7 8l4 3.500" a="#1f8fa8" />
      <Ring className="ml-[3px] h-[21px]" d="M10 4.500L6.500 8l3.500 3.500" />
      <div className="ml-[3px] flex h-[23px] w-[56px] items-center justify-end border border-[#777] bg-white pr-[1px] text-[14px]"><T w={13}>4/<span className="align-top text-[10px]">4</span></T></div>
      <Ring className="ml-[3px] h-[21px]" d="M6.500 4.500L10 8l-3.500 3.500" c="#aaa" a="#8fb8da" />
      <Ring className="ml-[3px] h-[21px]" d="M5 4.500L9 8l-4 3.500M11 4.500v7" c="#aaa" a="#8fb8da" />
      <Sep className="ml-[3px] h-[16px]" />
      <Ring className="ml-[3px] h-[21px]" d={LEFT} a="#5b8a1c" />
      <Ring className="ml-[3px] h-[21px]" d={RIGHT} a="#a5bf86" c="#aaa" />
      <Grip className="ml-auto" />
      <PageDoc className="ml-[3px] h-[20px] w-[9px]" />
      <div className="ml-[2px] flex h-[27px] w-[16px] items-center justify-center border border-[#8d6d22] bg-[#dfba60]"><I className="h-[22px] w-[9px]"><path d="M1 0v6h14V0M1 16V9h14v7" fill="#fff" stroke="#666" strokeWidth="1.200" /></I></div>
      <I className="ml-[1px] h-[14px] w-[13px]"><path d="M.7 1h4l2 3v11h-6zM9 1h4l2 3v11H9z" fill="#fff" stroke="#777" /></I>
      <I className="ml-[3px] h-[20px] w-[13px]"><path d="M1 0v7h5V0M1 16v-5l5 3v2M9 0v7h6V0M9 16v-5l6 3v2M6 5l3 5" stroke="#777" /></I>
      <Grip className="ml-[3px]" />
      <div className="ml-[2px] flex h-[23px] w-[45px] items-center border border-[#777] bg-white"><T w={28} className="ml-[2px]">189.98%</T><Caret className="ml-[6px]" /></div>
      <Ring className="ml-[5px] h-[21px]" d="M4 8h8" a="#2a7fc4" />
      <div className="ml-[3px] flex w-[64px] items-center">
        <div className="h-px w-[34px] bg-[#777]" /><div className="h-[21px] w-[5px] border border-[#888] bg-[#f4f4f4]" /><div className="h-px w-[25px] bg-[#777]" />
      </div>
      <Ring className="ml-[3px] h-[21px]" d="M4 8h8M8 4.500v7" a="#2a7fc4" />
      <Grip className="ml-[4px]" />
      <I className="ml-[2px] h-[15px] w-[11px]"><path d="M1 1h14v14H1z" fill="#fff" stroke="#8193a6" strokeWidth="1.300" /><path d="M1 2h14" stroke="#4d78a8" strokeWidth="2.500" /></I>
      <Caret className="ml-[4px] scale-75" />
      <I className="mb-[20px] ml-[1px] mr-[3px] h-[6px] w-[5px]"><path d="M0 1h16" stroke="#444" strokeWidth="3" /><path d="M1 6h14l-7 9z" fill="#444" /></I>
    </div>
  );
}

const Ctl = ({ d, on, className }: { d: string; on?: boolean; className?: string }) => (
  <div className={clsx("flex h-[59px] w-[34.500px] shrink-0 items-center justify-center border", on ? "border-[#90c8f6] bg-[#c0dcf3]" : "border-transparent", className)}>
    <I className="h-[40px] w-[23px]" box="0 0 24 24">
      <circle cx="12" cy="12" r="10.700" fill="#fafafa" stroke="#555" strokeWidth="2" />
      <circle cx="12" cy="12" r="8.900" stroke="#cfcfcf" strokeWidth="1.200" />
      <path d={d} fill="#333" />
    </I>
  </div>
);

function Player() {
  return (
    <div className="absolute left-[108px] top-0 flex h-[1144px] w-[985px] flex-col border-x border-t-2 border-[#6e6e6e] bg-[#f0f0f0] shadow-[0_2px_14px_rgba(0,0,0,0.38)]">
      <div className="flex h-[38px] items-center bg-white pt-[2px] text-[15px]">
        <Clapper className="ml-[5px] h-[21px] w-[13px]" />
        <T w={91} className="ml-[3px] text-black">raihan chi square.mp4</T>
        <I className="ml-auto h-[2px] w-[9px]"><path d="M0 0h16v16H0z" fill="#111" /></I>
        <div className="ml-[27px] h-[14px] w-[9px] border border-[#222]" />
        <I className="ml-[27px] mr-[14.500px] h-[14px] w-[9px]"><path d="M0 0l16 16M16 0L0 16" stroke="#111" strokeWidth="1.600" /></I>
      </div>
      <div className="flex h-[28px] items-center bg-white pl-[4px] pt-[4px] text-[15px] text-black">
        <T w={14}>File</T>
        <T w={20} className="ml-[9px]">View</T>
        <T w={17} className="ml-[9px]">Play</T>
        <T w={37} className="ml-[9px]">Navigate</T>
        <T w={37} className="ml-[9px]">Favorites</T>
        <T w={20} className="ml-[8px]">Help</T>
      </div>
      <QuickBar />
      <RibbonTabs />
      <Ribbon />
      <div className="flex h-[27px] items-center bg-[#3c3c3c] text-[14px]">
        <div className="flex h-full w-[52px] items-center bg-[#f0f0f0] pl-[3px] text-[#333]">
          <T w={33}>chisquare</T>
          <I className="mb-[7px] ml-[8px] h-[8px] w-[5px]"><path d="M1 1l14 14M15 1L1 15" stroke="#444" strokeWidth="2" /></I>
        </div>
        <I className="ml-[3px] h-[11px] w-[7px]"><path d="M0 8h16M8 0v16" stroke="#ccc" strokeWidth="2" /></I>
        <I className="ml-auto mr-[4px] h-[11px] w-[7px]"><path d="M1 0l14 16M15 0L1 16" stroke="#ddd" strokeWidth="2" /></I>
      </div>
      <div className="flex h-[5px] flex-col bg-[#eee]"><div className="mt-[3px] h-[2px] bg-[#555]" /></div>
      <div className="flex h-[702px] border-l-[4px] border-[#444]">
        <Page />
        <div className="w-[3px] bg-[#444]" />
        <div className="flex flex-1 flex-col items-center bg-[#e4e4e4]">
          <div className="flex h-[15px] w-full items-center justify-center border border-[#aaa] bg-[#f0f0f0]"><I className="h-[5px] w-[5px]"><path d="M0 14L8 2l8 12z" fill="#555" /></I></div>
          <div className="mt-[539px] flex h-[48px] w-full items-center justify-center border border-[#aaa] bg-[#f6f6f6]"><I className="h-[5px] w-[4px]"><path d="M0 3h16M0 12h16" stroke="#888" strokeWidth="3" /></I></div>
          <div className="mt-auto flex h-[15px] w-full items-center justify-center border border-[#aaa] bg-[#f0f0f0]"><I className="h-[5px] w-[5px]"><path d="M0 2l8 12 8-12z" fill="#555" /></I></div>
        </div>
      </div>
      <div className="h-[3px] bg-[#8f8f8f]" />
      <PdfStatus />
      <div className="h-[97px]">
        <div className="relative ml-[5px] mt-[13px] h-[11px] w-[972px] border-l border-t border-[#999] bg-white">
          <div className="absolute left-[756px] top-[-6px] flex h-[22px] w-[12px] items-center justify-center border-b-2 border-r-2 border-l border-t border-b-[#555] border-l-white border-r-[#555] border-t-white bg-[#f0f0f0]"><div className="h-[13px] w-[6px] border border-dotted border-[#666]" /></div>
        </div>
        <div className="flex h-[72px] items-center pt-[6px]">
          <Ctl d="M9 6l8 6-8 6z" />
          <Ctl on className="ml-[0.500px]" d="M8 7h3v10H8zM13 7h3v10h-3z" />
          <Ctl d="M8 7.500h9v9H8z" />
          <Sep className="ml-[2px] h-[56px] bg-[#999]" />
          <Ctl className="ml-[2px]" d="M6 7h2.500v10H6zM17 6.500v11L9 12z" />
          <Ctl d="M12 7v10l-6-5zM18 7v10l-6-5z" />
          <Ctl d="M6 7v10l6-5zM12 7v10l6-5z" />
          <Ctl d="M6 6.500v11l8-5.500zM15.500 7H18v10h-2.500z" />
          <Sep className="ml-px h-[56px] bg-[#999]" />
          <Ctl className="ml-[2px]" d="M7 7h2.500v10H7zM11 6l7 6-7 6z" />
          <Sep className="ml-px h-[56px] bg-[#999]" />
          <I className="ml-auto h-[40px] w-[24px]" box="0 0 24 24">
            <path d="M0 8h4v8H0z" fill="#e5a11d" /><path d="M3 8l9-8v24l-9-8z" fill="#999" stroke="#666" /><path d="M6 7l4-4v18l-4-4z" fill="#ddd" />
            <path d="M15 9c1.500 2 1.500 4 0 6M17.500 6c3 3.500 3 8.500 0 12M20.500 3.500c4 5 4 12 0 17" stroke="#5fd63a" strokeWidth="1.500" />
          </I>
          <I className="mb-[5px] ml-[10px] mr-[4px] h-[26px] w-[36px]" box="0 0 36 28"><path d="M0 25L26 10" stroke="#888" /><path d="M0 26h26" stroke="#fff" /><path d="M35 0v25.500h-9" stroke="#444" strokeWidth="2" /></I>
        </div>
      </div>
      <div className="flex h-[40px] items-center border-t border-[#555] bg-black text-[15px] text-white">
        <T w={28} className="ml-[5px]">Paused</T>
        <T w={53} className="ml-auto">24:05 / 30:40</T>
        <I className="ml-[7px] mr-[5px] h-[13px] w-[13px]"><path d="M4 2l4 4 4-4v12l-4-4-4 4z" fill="#ccc" /><path d="M0 2h3M0 7h3M0 12h3M13 2h3M13 7h3M13 12h3" stroke="#d8c92a" /></I>
      </div>
      <div className="h-[2px] bg-[#a8a8a8]" />
    </div>
  );
}

/* ---------- taskbar ---------- */
const Slot = ({ children, open }: Kids & { open?: boolean }) => (
  <div className="flex h-full w-[38.800px] flex-col items-center">
    <div className="flex flex-1 items-center pt-[3px]">{children}</div>
    <div className={clsx("h-[3px] w-[32px]", open && "bg-[#76b9ed]")} />
  </div>
);

function Taskbar() {
  return (
    <div className="relative flex h-[56px] items-center bg-gradient-to-r from-[#20373f] from-50% to-[#1a2341] text-white">
      <div className="flex h-full w-[38px] items-center justify-center">
        <I className="h-[23px] w-[13px]"><path d="M0 2l7-1v6.600H0zM8 .800L16 0v7.600H8zM0 8.400h7V15l-7-1zM8 8.400h8V16l-8-.8z" fill="#fff" /></I>
      </div>
      <div className="flex h-full w-[268px] items-center border-y border-[#bbb] bg-[#f0f0f0] text-[19px] text-[#444]">
        <I className="ml-[9px] h-[23px] w-[13px]"><ellipse cx="10" cy="5.500" rx="5" ry="5" stroke="#333" strokeWidth="1.300" /><path d="M6.500 9L.5 16" stroke="#333" strokeWidth="1.500" /></I>
        <T w={102} className="ml-[9px]">Type here to search</T>
      </div>
      <Slot><I className="h-[22px] w-[14px]"><path d="M1 5h9v6H1zM1 0v2h9V0M1 16v-2h9v2M13.500 0v4M13.500 9v7" stroke="#ddd" strokeWidth="1.200" /><path d="M12.500 5h3v3h-3z" fill="#fff" /></I></Slot>
      <Slot><I className="h-[34px] w-[20px]"><path d="M0 8C0 3.500 3.500 0 8 0s8 3 8 6.500c0 3-2.500 4-4.500 4-1.500 0-2-.7-1.500-1.500C11 7 9 5.300 6.500 5.300 3 5.300 0 7 0 8z" fill="#35c1a0" /><path d="M8 0c4.500 0 8 3 8 6.500 0 3-2.500 4-4.500 4-1.500 0-2-.7-1.500-1.500 1.500-3-1-6-5-7z" fill="#5fd85f" /><path d="M0 8c0-4 6-6 9-3-4-1-6 2-6 5 0 3 2 6 6 6C4 16.500 0 13 0 8z" fill="#1b83d8" /><path d="M5.500 7.500C4 12 8 14.500 14.500 12.500 12 17 5 17 3 12c-.5-2 1-4 2.500-4.500z" fill="#0c59a4" /></I></Slot>
      <Slot open><I className="h-[26px] w-[18px]"><path d="M0 0h6l2 2h8v14H0z" fill="#ffd667" /><path d="M0 0h6l1.500 3H0z" fill="#e0a100" /><path d="M3 16V9h10v7h-3v-3H6v3z" fill="#3f97e0" /></I></Slot>
      <Slot><I className="h-[34px] w-[19px]"><path d="M5 5V1h6v4" stroke="#ccc" strokeWidth="1.500" /><path d="M0 4.500h16V16H0z" fill="#f4f4f4" /><path d="M5 7.500h2.700v2.800H5z" fill="#f25022" /><path d="M8.500 7.500h2.700v2.800H8.500z" fill="#7fba00" /><path d="M5 11h2.700v2.800H5z" fill="#00a4ef" /><path d="M8.500 11h2.700v2.800H8.500z" fill="#ffb900" /></I></Slot>
      <Slot><I className="h-[32px] w-[19px]"><path d="M0 5.500L8 0l8 5.500V16H0z" fill="#1066b5" /><path d="M1.500 5.500h13L8 11z" fill="#f4f4f4" /><path d="M0 5.500l16 10.500H0z" fill="#28a8ea" /><path d="M16 5.500L8 11l8 5z" fill="#4cc8f5" /></I></Slot>
      <Slot open><I className="h-[32px] w-[18px]"><circle cx="8" cy="8" r="8" fill="#f4c430" /><path d="M1 4a8 8 0 0 1 14 0H8a4 4 0 0 0-3.500 6z" fill="#dd4b3e" /><path d="M1 4a8 8 0 0 0 6 12l3.500-6H5z" fill="#2fa257" /><circle cx="8" cy="8" r="3.700" fill="#fff" /><circle cx="8" cy="8" r="2.900" fill="#4285f4" /></I></Slot>
      <Slot open><div className="flex h-[32px] w-[18px] items-center justify-center rounded-[6px/9px] bg-[#4a8cff]"><I className="h-[12px] w-[12px]"><path d="M0 2h10v12H0zM11 6l5-4v12l-5-4z" fill="#fff" /></I></div></Slot>
      <Slot><I className="h-[34px] w-[19px]"><path d="M0 0h16v16H0z" fill="#3f5899" /><path d="M8.500 16V9.500H6.500V7h2V5c0-2 1.500-3 5-2.600v2.100c-2 0-2.200.300-2.200 2.500h2.200v2.500h-2.200V16z" fill="#fff" /></I></Slot>
      <Slot open><I className="h-[32px] w-[18px]"><path d="M0 0h16v16H0z" fill="#26a4ea" /><path d="M0 10l5-4 10 10H0z" fill="#15458f" /><path d="M9 10l5-3 2 1.500V16h-2z" fill="#5b7fd6" /><ellipse cx="10.500" cy="4" rx="1.700" ry="1.500" fill="#fff" /></I></Slot>
      <div className="absolute left-[656px] top-0 flex h-[56px] w-[39px] border-b-[3px] border-[#ffee00] bg-[#5f6e78]">
        <div className="flex w-[30px] items-center justify-center bg-[#8f9150] pl-[6px]"><Clapper className="h-[32px] w-[18px]" /></div>
      </div>
      <I className="ml-auto h-[11px] w-[10px]"><path d="M0 15L8 2l8 13" stroke="#ddd" strokeWidth="2" /></I>
      <I className="ml-[9px] h-[20px] w-[10px]"><path d="M1 4.500h9v7H1zM10 7l5-2v6l-5-2M3 2c2-2 5-2 7 0M3 14c2 2 5 2 7 0" stroke="#ddd" strokeWidth="1.300" /></I>
      <I className="ml-[8px] h-[20px] w-[13px]"><path d="M3 12a4 4 0 0 1 0-7c2-6 9-6 10 0 3 1 3 6 0 7z" fill="#d6d6d6" /><path d="M11.500 6L16 16H7z" fill="#f5a800" /><path d="M11.500 9v4M11.500 14v1" stroke="#222" /></I>
      <I className="ml-[6px] h-[13px] w-[12px]"><path d="M1 1h12.500v14H1z" stroke="#ddd" strokeWidth="1.300" /><path d="M3 4h8v8H3z" fill="#fff" /><path d="M15 5v6" stroke="#ddd" strokeWidth="1.500" /></I>
      <I className="ml-[8px] h-[18px] w-[11px]"><path d="M1 16C1 6 7 1 15 1M5 16c0-6 4-10 10-10M9 16c0-3 2-6 6-6" stroke="#ccc" strokeWidth="1.500" /><circle cx="14" cy="14.500" r="1.500" fill="#fff" /></I>
      <I className="ml-[6px] h-[17px] w-[12px]"><path d="M0 5h3l4-4v14l-4-4H0z" stroke="#ddd" strokeWidth="1.200" /><path d="M9 5c1 2 1 4 0 6M11.500 3c2 3 2 7 0 10M14 1c2.500 4 2.500 10 0 14" stroke="#ccc" strokeWidth="1.100" /></I>
      <div className="ml-[6px] flex w-[48px] flex-col items-center text-[15px] leading-[25px]"><T w={32}>1:57 PM</T><T w={47}>12/23/2020</T></div>
      <I className="ml-[12px] h-[22px] w-[13px]"><path d="M.7.700h14.600v12H10l-2 3-2-3H.7z" stroke="#eee" strokeWidth="1.200" /></I>
      <Sep className="ml-[14px] mr-[3px] h-full bg-[#55607a]" />
    </div>
  );
}

export default function App() {
  return (
    <div className="relative h-[1200px] w-[1200px] overflow-hidden bg-white font-['Open_Sans','Noto_Sans',sans-serif] [-webkit-text-stroke:0.1px]">
      <Explorer />
      <Player />
      <Taskbar />
    </div>
  );
}
